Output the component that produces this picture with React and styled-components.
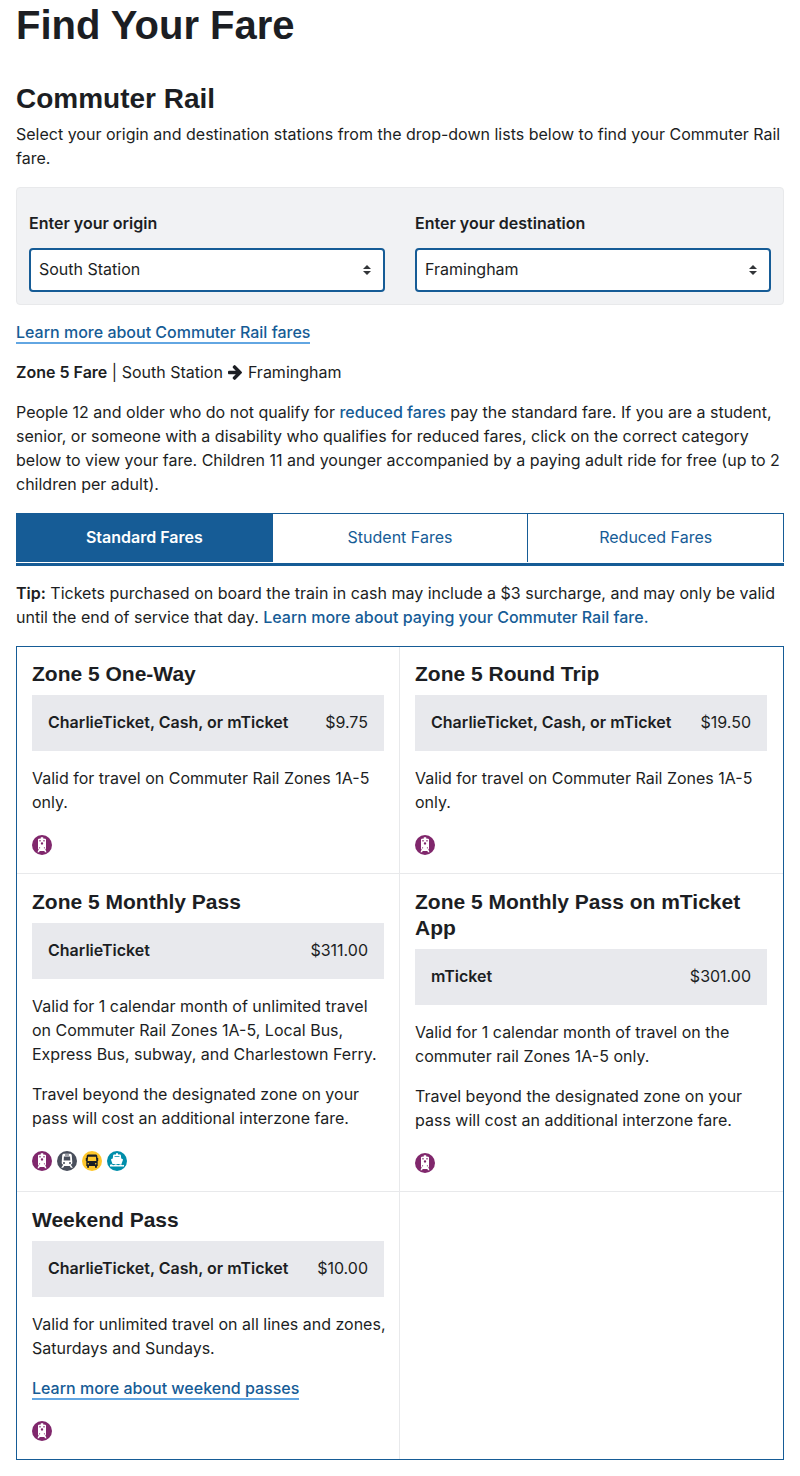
import React, { useState } from "react";
import styled, { createGlobalStyle, css } from "styled-components";

const blue = "#165c96";
const ink = "#1c1e23";
const line = "#e8e9eb";

const GlobalStyle = createGlobalStyle`
  *, *::before, *::after { box-sizing: border-box; }
  body {
    margin: 0;
    background: #fff;
    color: ${ink};
    font-family: Inter, "Liberation Sans", sans-serif;
    font-size: 16px;
    line-height: 24px;
  }
`;

const Page = styled.main`
  padding: 0 16px 16px;
`;

const heading = css`
  margin: 0;
  font-family: "Liberation Sans", sans-serif;
  font-weight: 700;
`;

const PageTitle = styled.h1`
  ${heading}
  font-size: 40px;
  line-height: 50px;
  margin-bottom: 31px;
`;

const SectionTitle = styled.h2`
  ${heading}
  font-size: 28px;
  line-height: 36px;
  margin-bottom: 5px;
`;

const Text = styled.p`
  margin: 0 0 16px;
  white-space: ${(p) => (p.$keepLines ? "pre" : "normal")};
`;

const Strong = styled.strong`
  font-weight: 600;
`;

const Link = styled.a`
  color: ${blue};
  font-weight: 500;
  text-decoration: none;
  border-bottom: ${(p) => (p.$underlined ? "2px solid #62a6e2" : "0")};
`;

const Finder = styled.form`
  display: grid;
  grid-template-columns: 1fr 1fr;
  gap: 30px;
  margin: 17px 0 15px;
  padding: 23px 12px 12px;
  background: #f1f2f4;
  border: 1px solid ${line};
  border-radius: 4px;
`;

const Field = styled.div`
  display: flex;
  flex-direction: column;
  gap: 13px;
`;

const Label = styled.label`
  font-weight: 600;
`;

const SelectBox = styled.div`
  display: grid;
  align-items: center;

  > * { grid-area: 1 / 1; }
`;

const Select = styled.select`
  appearance: none;
  width: 100%;
  height: 44px;
  padding: 0 32px 2px 8px;
  border: 2px solid ${blue};
  border-radius: 4px;
  background: #fff;
  color: ${ink};
  font: inherit;
`;

const SelectArrows = styled.svg`
  justify-self: end;
  margin-right: 14px;
  pointer-events: none;
`;

const ArrowSvg = styled.svg`
  margin: 0 1px;
  vertical-align: -2px;
`;

const Tabs = styled.div`
  display: flex;
  margin: 17px 0 15px;
  padding-bottom: 1px;
  border-bottom: 3px solid ${blue};
`;

const Tab = styled.button`
  box-sizing: content-box;
  flex: 1 1 0;
  height: 46px;
  padding: 0 0 2px;
  border: 1px solid ${blue};
  border-width: 1px 1px 0 0;
  background: ${(p) => (p.$active ? blue : "#fff")};
  color: ${(p) => (p.$active ? "#fff" : blue)};
  font: inherit;
  font-weight: ${(p) => (p.$active ? 600 : 400)};
  cursor: pointer;

  &:first-child { border-left-width: 1px; }
`;

const FareGrid = styled.section`
  display: grid;
  grid-template-columns: 1fr 1fr;
  margin-top: 17px;
  border: 1px solid ${blue};
`;

const FareCell = styled.article`
  min-width: 0;
  padding: 15px 16px 18px 15px;
  border-bottom: 1px solid ${line};

  &:nth-child(-n + 2) {
    padding-top: 14px;
  }

  &:nth-child(odd) {
    padding-right: 15px;
    border-right: 1px solid ${line};
  }

  &:nth-last-child(-n + 2) {
    border-bottom: 0;
  }
`;

const FareTitle = styled.h3`
  ${heading}
  font-size: 21px;
  line-height: 26px;
  margin-bottom: 8px;
`;

const PriceBar = styled.div`
  display: flex;
  justify-content: space-between;
  margin-bottom: 15px;
  padding: 15px 16px 17px;
  background: #e8e9ed;
`;

const Modes = styled.div`
  display: flex;
  gap: 5px;
  margin-top: 21px;
`;

const ModeSvg = styled.svg`
  display: block;
`;

function ArrowIcon() {
  return (
    <ArrowSvg width="14" height="15" viewBox="0 181 1472 1558" role="img" aria-label="to">
      <path
        fill="currentColor"
        d="M1472 960q0 54-37 91l-651 651q-39 37-91 37-51 0-90-37l-75-75q-38-38-38-91t38-91l293-293H117q-52 0-84.500-37.500T0 1024V896q0-53 32.500-90.500T117 768h704L528 474q-38-36-38-90t38-90l75-75q38-38 90-38 53 0 91 38l651 651q37 35 37 90z"
      />
    </ArrowSvg>
  );
}

function CommuterRailIcon() {
  return (
    <ModeSvg width="20" height="20" viewBox="0 0 20 20" role="img" aria-label="Commuter Rail">
      <circle cx="10" cy="10" r="10" fill="#80276c" />
      <path
        fill="#fff"
        fillRule="evenodd"
        d="M8.800 2.200h2.400v1.200l2 .3c.5.100.8.500.8 1v8.600c0 .5-.3.900-.7 1l1.200 2.900h-1.600l-.5-1.100H7.600l-.5 1.100H5.500l1.200-2.900c-.4-.1-.7-.5-.7-1V4.700c0-.5.300-.9.800-1l2-.3zM7.400 5v1.500h1.200V5zm4 0v1.500h1.200V5zM10 7.200a1.200 1.200 0 1 0 0 2.400 1.200 1.200 0 0 0 0-2.400zM7.600 12.200a.6.600 0 1 0 0 1.200.6.600 0 0 0 0-1.200zm4.800 0a.6.600 0 1 0 0 1.200.6.600 0 0 0 0-1.200z"
      />
    </ModeSvg>
  );
}

function SubwayIcon() {
  return (
    <ModeSvg width="20" height="20" viewBox="0 0 20 20" role="img" aria-label="Subway">
      <circle cx="10" cy="10" r="10" fill="#494f5c" />
      <path
        fill="#fff"
        fillRule="evenodd"
        d="M7 2.800h6c1 0 1.700.6 1.800 1.600l.5 7.200c.1 1.100-.5 1.900-1.500 2.100l2 3h-1.900l-1.100-1.700H7.200l-1.100 1.700H4.200l2-3c-1-.2-1.600-1-1.500-2.100l.5-7.200c.1-1 .8-1.600 1.800-1.600zM8 3.600v1h4v-1zM6.900 5.500l-.2 4.100h6.600l-.2-4.100zM7 11a1 1 0 1 0 0 2 1 1 0 0 0 0-2zm6 0a1 1 0 1 0 0 2 1 1 0 0 0 0-2z"
      />
    </ModeSvg>
  );
}

function BusIcon() {
  return (
    <ModeSvg width="20" height="20" viewBox="0 0 20 20" role="img" aria-label="Bus">
      <circle cx="10" cy="10" r="10" fill="#ffc72c" />
      <path
        fill="#1c1e23"
        fillRule="evenodd"
        d="M6.500 3.600h7c1 0 1.700.6 1.800 1.600l.2 1.800h.7v3h-.5v5h-.8v1.700h-1.900V15H7v1.700H5.100V15h-.8v-5h-.5V7h.7l.2-1.800c.1-1 .8-1.600 1.800-1.600zM6.100 5.800l-.4 4.300h8.600l-.4-4.300zM6.300 12a.8.800 0 1 0 0 1.600.8.800 0 0 0 0-1.600zm7.400 0a.8.800 0 1 0 0 1.600.8.800 0 0 0 0-1.600z"
      />
    </ModeSvg>
  );
}

function FerryIcon() {
  return (
    <ModeSvg width="20" height="20" viewBox="0 0 20 20" role="img" aria-label="Ferry">
      <circle cx="10" cy="10" r="10" fill="#008eaa" />
      <path
        fill="#fff"
        d="M9 2.300h2v1.300h2c.5 0 .8.300.9.800l.3 3.100 1.300.5c.4.200.5.500.4.900l-1.400 4.200H5.500L4.100 8.900c-.1-.4 0-.7.400-.9l1.300-.5.300-3.100c.1-.5.400-.8.900-.8h2z"
      />
      <path fill="#008eaa" d="M7.600 5h4.800l.1.800h-5z" />
      <path
        fill="#fff"
        d="M3 13.800q1.200-.9 2.300 0t2.300 0 2.400 0 2.400 0 2.300 0 2.300 0v1.700H3z"
      />
    </ModeSvg>
  );
}

const modeIcons = {
  rail: CommuterRailIcon,
  subway: SubwayIcon,
  bus: BusIcon,
  ferry: FerryIcon,
};

const fares = [
  {
    title: "Zone 5 One-Way",
    media: "CharlieTicket, Cash, or mTicket",
    price: "$9.75",
    notes: ["Valid for travel on Commuter Rail Zones 1A-5 only."],
    modes: ["rail"],
  },
  {
    title: "Zone 5 Round Trip",
    media: "CharlieTicket, Cash, or mTicket",
    price: "$19.50",
    notes: ["Valid for travel on Commuter Rail Zones 1A-5 only."],
    modes: ["rail"],
  },
  {
    title: "Zone 5 Monthly Pass",
    media: "CharlieTicket",
    price: "$311.00",
    notes: [
      "Valid for 1 calendar month of unlimited travel on Commuter Rail Zones 1A-5, Local Bus, Express Bus, subway, and Charlestown Ferry.",
      "Travel beyond the designated zone on your pass will cost an additional interzone fare.",
    ],
    modes: ["rail", "subway", "bus", "ferry"],
  },
  {
    title: "Zone 5 Monthly Pass on mTicket App",
    media: "mTicket",
    price: "$301.00",
    notes: [
      "Valid for 1 calendar month of travel on the commuter rail Zones 1A-5 only.",
      "Travel beyond the designated zone on your pass will cost an additional interzone fare.",
    ],
    modes: ["rail"],
  },
  {
    title: "Weekend Pass",
    media: "CharlieTicket, Cash, or mTicket",
    price: "$10.00",
    notes: ["Valid for unlimited travel on all lines and zones,\nSaturdays and Sundays."],
    link: "Learn more about weekend passes",
    modes: ["rail"],
  },
];

const tabs = ["Standard Fares", "Student Fares", "Reduced Fares"];

function StationSelect({ id, label, value, onChange }) {
  return (
    <Field>
      <Label htmlFor={id}>{label}</Label>
      <SelectBox>
        <Select id={id} value={value} onChange={(e) => onChange(e.target.value)}>
          <option>South Station</option>
          <option>Framingham</option>
        </Select>
        <SelectArrows width="8" height="10" viewBox="0 0 8 10" aria-hidden="true">
          <path fill="#333639" d="M4 0l4 4H0zM4 10l4-4H0z" />
        </SelectArrows>
      </SelectBox>
    </Field>
  );
}

function Fare({ title, media, price, notes, link, modes }) {
  return (
    <FareCell>
      <FareTitle>{title}</FareTitle>
      <PriceBar>
        <Strong>{media}</Strong>
        <span>{price}</span>
      </PriceBar>
      {notes.map((note) => (
        <Text key={note} $keepLines={note.includes("\n")}>{note}</Text>
      ))}
      {link && (
        <Text>
          <Link href="#weekend" $underlined>{link}</Link>
        </Text>
      )}
      <Modes>
        {modes.map((mode) => {
          const Icon = modeIcons[mode];
          return <Icon key={mode} />;
        })}
      </Modes>
    </FareCell>
  );
}

export default function App() {
  const [origin, setOrigin] = useState("South Station");
  const [destination, setDestination] = useState("Framingham");
  const [active, setActive] = useState(tabs[0]);

  return (
    <Page>
      <GlobalStyle />
      <PageTitle>Find Your Fare</PageTitle>
      <SectionTitle>Commuter Rail</SectionTitle>
      <Text>
        Select your origin and destination stations from the drop-down lists below to find your
        Commuter Rail fare.
      </Text>
      <Finder>
        <StationSelect id="origin" label="Enter your origin" value={origin} onChange={setOrigin} />
        <StationSelect
          id="destination"
          label="Enter your destination"
          value={destination}
          onChange={setDestination}
        />
      </Finder>
      <Text>
        <Link href="#fares" $underlined>Learn more about Commuter Rail fares</Link>
      </Text>
      <Text>
        <Strong>Zone 5 Fare</Strong> | {origin} <ArrowIcon /> {destination}
      </Text>
      <Text>
        People 12 and older who do not qualify for <Link href="#reduced">reduced fares</Link> pay
        the standard fare. If you are a student, senior, or someone with a disability who qualifies
        for reduced fares, click on the correct category below to view your fare. Children 11 and
        younger accompanied by a paying adult ride for free (up to 2 children per adult).
      </Text>
      <Tabs role="tablist">
        {tabs.map((tab) => (
          <Tab
            key={tab}
            type="button"
            role="tab"
            aria-selected={tab === active}
            $active={tab === active}
            onClick={() => setActive(tab)}
          >
            {tab}
          </Tab>
        ))}
      </Tabs>
      <Text>
        <Strong>Tip:</Strong> Tickets purchased on board the train in cash may include a $3
        surcharge, and may only be valid until the end of service that day.{" "}
        <Link href="#paying">Learn more about paying your Commuter Rail fare.</Link>
      </Text>
      <FareGrid>
        {fares.map((fare) => (
          <Fare key={fare.title} {...fare} />
        ))}
        <FareCell aria-hidden="true" />
      </FareGrid>
    </Page>
  );
}
